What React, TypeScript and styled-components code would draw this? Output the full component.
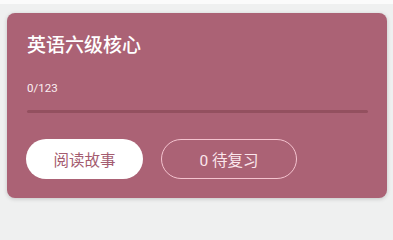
import React from 'react';
import styled, { createGlobalStyle } from 'styled-components';

const GlobalStyle = createGlobalStyle`
  html, body {
    margin: 0;
    padding: 0;
    background: #eff0f0;
  }
  body {
    font-family: Roboto, "Noto Sans CJK SC", "Noto Sans", sans-serif;
  }
`;

const Page = styled.div`
  width: 393px;
  height: 209px;
  box-sizing: border-box;
  border-top: 4px solid #fbfbfb;
  padding: 9px 6px 0 7px;
  background: #eff0f0;
`;

const Card = styled.section`
  box-sizing: border-box;
  height: 185px;
  border-radius: 8px;
  background: #ab6275;
  padding: 21px 19px 0 20px;
  box-shadow: 0 1px 4px rgb(0 0 0 / 18%);
  display: flex;
  flex-direction: column;
`;

const Title = styled.h2`
  margin: 0;
  color: #ffffff;
  font-size: 19px;
  font-weight: 500;
  line-height: 24px;
`;

const Count = styled.div`
  margin-top: 23px;
  color: #fbeff2;
  font-size: 11.5px;
  line-height: 14px;
`;

const Track = styled.div`
  margin-top: 15px;
  height: 3px;
  border-radius: 2px;
  background: #93505f;
`;

const Actions = styled.div`
  margin-top: 26px;
  display: flex;
  gap: 19px;
`;

type PillProps = {
  $outline?: boolean;
};

const Pill = styled.button<PillProps>`
  box-sizing: border-box;
  height: 40px;
  border-radius: 20px;
  font-family: inherit;
  font-size: 15.5px;
  padding: 0;
  cursor: pointer;
  display: inline-flex;
  align-items: center;
  justify-content: center;
  width: ${(p) => (p.$outline ? '136px' : '117px')};
  background: ${(p) => (p.$outline ? 'transparent' : '#ffffff')};
  color: ${(p) => (p.$outline ? '#fbe6ec' : '#a45c70')};
  border: ${(p) => (p.$outline ? '1.5px solid #f4c3cf' : '0')};
  margin-left: -1px;
`;

export default function App() {
  return (
    <>
      <GlobalStyle />
      <Page>
        <Card>
          <Title>英语六级核心</Title>
          <Count>0/123</Count>
          <Track />
          <Actions>
            <Pill>阅读故事</Pill>
            <Pill $outline>0 待复习</Pill>
          </Actions>
        </Card>
      </Page>
    </>
  );
}
